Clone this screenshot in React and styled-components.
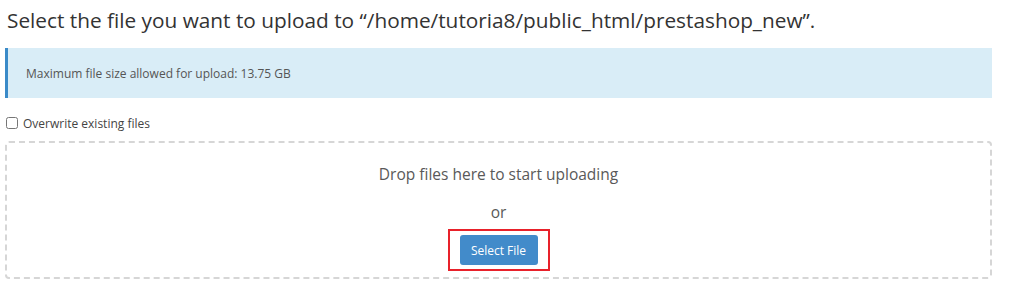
import styled, { createGlobalStyle } from "styled-components";

const Global = createGlobalStyle`
    body {
        margin: 0;
        background: #fff;
        font-family: "Open Sans", "Liberation Sans", sans-serif;
        color: #333;
    }
`;

export default function App() {
    return (
        <Page>
            <Global />
            <Title>Select the file you want to upload to “/home/tutoria8/public_html/prestashop_new”.</Title>
            <Alert>Maximum file size allowed for upload: 13.75 GB</Alert>
            <CheckRow>
                <Box type="checkbox" />
                Overwrite existing files
            </CheckRow>
            <DropZone>
                <DropText>Drop files here to start uploading</DropText>
                <Or>or</Or>
                <Highlight>
                    <Button>Select File</Button>
                </Highlight>
            </DropZone>
        </Page>
    );
}

const Page = styled.div`
    width: 987px;
    padding: 0 0 0 5px;
    display: flex;
    flex-direction: column;
`;

const Title = styled.h1`
    margin: 6px 0 0 2px;
    font-size: 20.8px;
    font-weight: 400;
    line-height: 28px;
    color: #333;
`;

const Alert = styled.div`
    margin-top: 14px;
    height: 50px;
    box-sizing: border-box;
    display: flex;
    align-items: center;
    padding-left: 18px;
    background: #d9edf7;
    border-left: 3px solid #3a8ac8;
    font-size: 12px;
    color: #555;
`;

const CheckRow = styled.label`
    margin-top: 17px;
    display: flex;
    align-items: center;
    gap: 5px;
    font-size: 12px;
    color: #444;
    height: 16px;
`;

const Box = styled.input`
    margin: 0 0 0 1px;
    width: 12px;
    height: 12px;
`;

const DropZone = styled.div`
    margin-top: 10px;
    height: 138px;
    box-sizing: border-box;
    border: 2px dashed #d6d6d6;
    border-radius: 4px;
    display: flex;
    flex-direction: column;
    align-items: center;
    padding-top: 19px;
`;

const DropText = styled.div`
    font-size: 15.5px;
    line-height: 24px;
    color: #595959;
`;

const Or = styled.div`
    margin-top: 14px;
    font-size: 15.5px;
    line-height: 24px;
    color: #595959;
`;

const Highlight = styled.div`
    margin-top: 5px;
    border: 2px solid #e8212a;
    padding: 4px 10px;
`;

const Button = styled.button`
    width: 78px;
    height: 30px;
    border: none;
    border-radius: 3px;
    background: #428bca;
    color: #fff;
    font-family: "Open Sans", "Liberation Sans", sans-serif;
    font-size: 12px;
    padding: 0;
`;
